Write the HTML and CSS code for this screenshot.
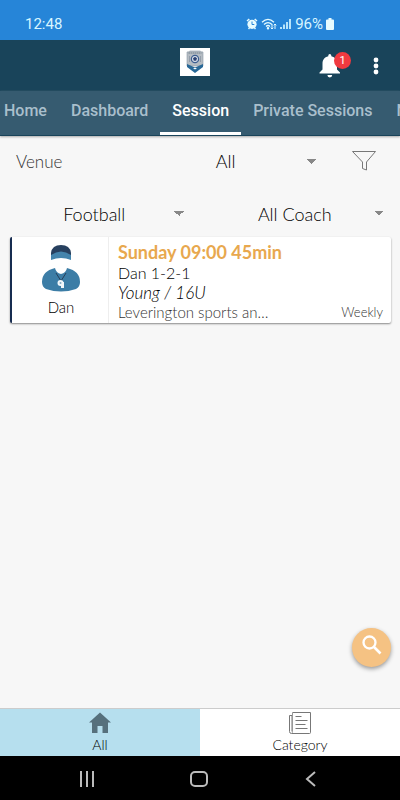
FILE: index.html
```html
<!DOCTYPE html>
<html lang="en">
<head>
<meta charset="utf-8">
<meta name="viewport" content="width=device-width, initial-scale=1">
<title>Sessions</title>
<link rel="stylesheet" href="styles.css">
</head>
<body>
<div class="status">
  <span class="time">12:48</span>
  <div class="indicators">
    <svg width="12" height="12" viewBox="0 0 12 12"><path d="M1 3 3.300 1M11 3 8.700 1M2.500 11 3.500 10M9.500 11 8.500 10" stroke="#e6fbff" stroke-width="1.500"/><circle cx="6" cy="6.300" r="4.600" fill="#e6fbff"/><path d="M6 3.500v3h2.300" stroke="#2685d8" fill="none"/></svg>
    <svg width="16" height="12" viewBox="0 0 16 12" fill="none" stroke="#e6fbff" stroke-width="1.300"><path d="M1 4.200Q7 -1.500 13 4.200M3 6.500q4-3.800 8 0M5 8.500q2-2 4 0"/><circle cx="7" cy="10.300" r=".6"/><path d="M11 6v5M9.700 9.700 11 11l1.300-1.300M14 11V6M12.700 7.300 14 6l1.300 1.300" stroke-width="1"/></svg>
    <svg width="12" height="12" viewBox="0 0 12 12" fill="#b8e4fa"><path d="M0 9h2v2H0zM3 6.500h2V11H3zM6 4h2v7H6zM9 1h2v10H9z"/></svg>
    <span>96%</span>
    <svg width="8" height="12" viewBox="0 0 8 12" fill="#e6fbff"><path d="M2.500 0h3v1.500H7a1 1 0 0 1 1 1V11a1 1 0 0 1-1 1H1a1 1 0 0 1-1-1V2.500a1 1 0 0 1 1-1h1.500z"/></svg>
  </div>
</div>
<header class="appbar">
  <svg class="logo" width="30" height="28" viewBox="0 0 30 28"><path fill="#fff" d="M0 0h30v28H0z"/><path d="M7 4q2 0 3-1h10q1 1 3 1v14H7z" fill="#b5bcc3" stroke="#8b98a4" stroke-width=".6"/><path d="M8.500 5h13" stroke="#71808d" stroke-dasharray="1.500 .5"/><path d="M7 16l8 3.500 8-3.500v3l-8 6-8-6z" fill="#286897"/><path d="M13 20h4l-2 1.500z" fill="#fff"/><circle cx="15" cy="11" r="3.600" fill="#e1e6ed" stroke="#3c5e91" stroke-width="1.300"/><path d="m15 8.800 2 1.500-.8 2.400h-2.400L13 10.300z" fill="#2c4274"/><path d="M9.500 8v6M20.500 8v6" stroke="#8490a0" stroke-width=".7"/></svg>
  <div class="actions">
    <button class="bell" aria-label="Notifications, 1 new"><svg width="22" height="24" viewBox="0 0 22 24" fill="#fff"><path d="M9.300 2.200V1.500a1.500 1.500 0 0 1 3 0v.7c4 .8 5.700 3.800 5.700 7.300v6l3 3v1H.500v-1l3-3v-6c0-3.500 1.800-6.500 5.800-7.300zM8.400 21h4.800a2.400 2.400 0 0 1-4.800 0z"/></svg><span class="badge">1</span></button>
    <button class="more" aria-label="More options"><svg width="6" height="18" viewBox="0 0 6 18" fill="#fff"><circle cx="3" cy="3" r="2.400"/><circle cx="3" cy="9" r="2.400"/><circle cx="3" cy="15" r="2.400"/></svg></button>
  </div>
</header>
<nav class="tabs">
  <a href="#home">Home</a><a href="#dashboard">Dashboard</a><a class="current" href="#session" aria-current="page">Session</a><a href="#private">Private Sessions</a><a href="#news">News</a>
</nav>
<main>
  <div class="filters">
    <div class="row venue-row">
      <label for="venue">Venue</label>
      <select id="venue"><option>All</option></select>
      <button aria-label="Filter"><svg width="26" height="22" viewBox="0 0 26 22" fill="none" stroke="#777"><path d="M1.500 1.500h23l-9 10.500v8l-4-1.500V12z"/></svg></button>
    </div>
    <div class="row pair-row">
      <select aria-label="Sport"><option>Football</option></select>
      <select aria-label="Coach"><option>All Coach</option></select>
    </div>
  </div>
  <article class="card">
    <div class="coach">
      <svg width="40" height="48" viewBox="0 0 40 48"><path d="M10 12V8Q11 0 20 0t10 8v4z" fill="#27405f"/><path d="M10 15v-5Q20 3 30 10v5q-10-4-20 0z" fill="#4484ac"/><path d="M14 23Q1 26 1 37q0 5 4 7 15 5 30 0 4-2 4-7 0-11-13-14-1 5-6 6-5-1-6-6z" fill="#3c7da6"/><path d="m15 28 5 8 5-8" fill="none" stroke="#263d58"/><circle cx="19.500" cy="38" r="3" fill="#f2f7fa"/><path d="M19 37h4v6h-3v-4z" fill="#f2f7fa"/><circle cx="19.500" cy="38" r="1" fill="#84abc4"/></svg>
      <span>Dan</span>
    </div>
    <div class="details">
      <h2>Sunday 09:00 45min</h2>
      <p>Dan 1-2-1</p>
      <p class="group">Young / 16U</p>
      <div class="foot"><span class="place">Leverington sports an…</span><span>Weekly</span></div>
    </div>
  </article>
  <button class="search" aria-label="Search"><svg width="20" height="20" viewBox="0 0 20 20" fill="none" stroke="#fff"><circle cx="7.500" cy="7.500" r="6" stroke-width="2.300"/><path d="m12 12 6.500 6.500" stroke-width="2.600"/></svg></button>
</main>
<nav class="bottom">
  <a class="on" href="#all"><svg width="24" height="22" viewBox="0 0 24 22" fill="#56707c"><path d="m12 .500 11 10h-3V21h-5.500v-7h-5v7H4V10.500H1z"/></svg>All</a>
  <a href="#category"><svg width="24" height="24" viewBox="0 0 24 24" fill="none" stroke="#777"><path d="M4.500 1.500h18v20q0 1-1 1h-18q-2 0-2-2v-16h2.500v16"/><path d="M4.500 1.500v19q0 1.500-1 2" stroke="#999"/><path d="M7.500 5.500h6M7.500 9.500h12M7.500 13.500h10M7.500 17.500h12"/></svg>Category</a>
</nav>
<div class="system">
  <button aria-label="Recent apps"><svg width="18" height="18" viewBox="0 0 18 18" stroke="#bbb" stroke-width="2"><path d="M3 1v16M9 1v16M15 1v16"/></svg></button>
  <button aria-label="Home screen"><svg width="18" height="18" viewBox="0 0 18 18" fill="none" stroke="#bbb" stroke-width="2"><rect x="1" y="2" width="16" height="14" rx="4"/></svg></button>
  <button aria-label="Back"><svg width="18" height="18" viewBox="0 0 18 18" fill="none" stroke="#bbb" stroke-width="2"><path d="m13 2-8 7 8 7"/></svg></button>
</div>
</body>
</html>
```

FILE: styles.css
```css
* { box-sizing: border-box; }
body {
  margin: 0;
  min-height: 100vh;
  display: flex;
  flex-direction: column;
  overflow-x: hidden;
  background: #f7f7f7;
  color: #000;
  font-family: Lato, "Open Sans", sans-serif;
  font-weight: 300;
}
button { border: 0; padding: 0; background: none; font: inherit; }
a { color: inherit; text-decoration: none; }
svg { display: block; flex: none; }
h2, p { margin: 0; }

.status {
  height: 40px;
  padding: 8px 66px 0 25px;
  display: flex;
  align-items: center;
  justify-content: space-between;
  background: #2685d8;
  color: #d8f5ff;
  font: 15px/16px Roboto, sans-serif;
}
.indicators { display: flex; align-items: center; gap: 3px; }

.appbar {
  height: 51px;
  display: grid;
  grid-template-columns: 1fr auto 1fr;
  align-items: center;
  background: #19445a;
}
.logo { grid-column: 2; margin: 0 0 8px -10px; }
.actions {
  display: flex;
  justify-content: flex-end;
  align-items: center;
  gap: 32px;
  padding-right: 21px;
}
.bell { position: relative; }
.badge {
  position: absolute;
  left: 15px;
  top: -2px;
  width: 17px;
  height: 17px;
  border-radius: 50%;
  background: #f03a40;
  color: #fff;
  font: 11px/17px Roboto, sans-serif;
  text-align: center;
}

.tabs {
  display: flex;
  height: 45px;
  overflow: hidden;
  background: #365b70;
  border-bottom: 1px solid #19445a;
  box-shadow: 0 1px 2px #aaa;
  color: #a9bfcc;
  font: 500 16px/40px Roboto, sans-serif;
  white-space: nowrap;
}
.tabs a { flex: none; padding: 0 12px; }
.tabs a:first-child { padding-left: 4px; }
.tabs .current { color: #fff; border-bottom: 3px solid #fff; }

main {
  flex: 1;
  display: flex;
  flex-direction: column;
  padding: 0 9px 0 10px;
}
.row { display: grid; align-items: center; font-size: 18px; }
.venue-row { height: 50px; grid-template-columns: 31% 1fr 68px; }
.venue-row label { padding-left: 6px; color: #333; font-size: 17px; }
.venue-row button { justify-self: end; padding-right: 14px; }
.pair-row { height: 51px; padding-top: 4px; grid-template-columns: 1fr 1fr; gap: 20px; }
select {
  appearance: none;
  width: 100%;
  height: 32px;
  border: 0;
  padding: 0;
  background: linear-gradient(to bottom left, #888 50%, transparent 50%) right 12px center / 5px 5px no-repeat, linear-gradient(to bottom right, #888 50%, transparent 50%) right 7px center / 5px 5px no-repeat;
  color: #000;
  font: inherit;
  text-align: center;
  text-align-last: center;
}
.pair-row select { padding-right: 12px; }

.card {
  display: grid;
  grid-template-columns: 97px 1fr;
  height: 86px;
  border-left: 2px solid #172c50;
  border-radius: 2px;
  background: #fff;
  box-shadow: 0 1px 2px #888;
}
.coach {
  display: flex;
  flex-direction: column;
  align-items: center;
  gap: 5px;
  padding: 8px 0 0 2px;
  border-right: 1px solid #eee;
  font-size: 15px;
  line-height: 18px;
}
.details { padding: 4px 8px 0 9px; font-size: 16px; line-height: 20px; }
.details h2 { color: #e8a84e; font-size: 18px; font-weight: 700; line-height: 22px; }
.group { font-size: 17px; font-style: italic; }
.foot { display: flex; justify-content: space-between; color: #333; font-size: 13px; line-height: 18px; }
.place { font-size: 15px; }
.search {
  width: 39px;
  height: 39px;
  margin: auto 0 41px auto;
  padding: 0 0 6px 0;
  display: grid;
  place-items: center;
  border-radius: 50%;
  background: #f5c283;
  box-shadow: 0 2px 4px #999;
}

.bottom {
  display: grid;
  grid-template-columns: 1fr 1fr;
  height: 48px;
  border-top: 1px solid #ccc;
  background: #fff;
  font-size: 14px;
  line-height: 18px;
}
.bottom a {
  display: flex;
  flex-direction: column;
  align-items: center;
  justify-content: flex-end;
  gap: 1px;
  padding-bottom: 2px;
}
.bottom .on { background: #b6dfee; gap: 2px; }
.system {
  display: flex;
  justify-content: center;
  align-items: center;
  gap: 94px;
  padding: 2px 3px 0 0;
  height: 44px;
  background: #000;
}
```
